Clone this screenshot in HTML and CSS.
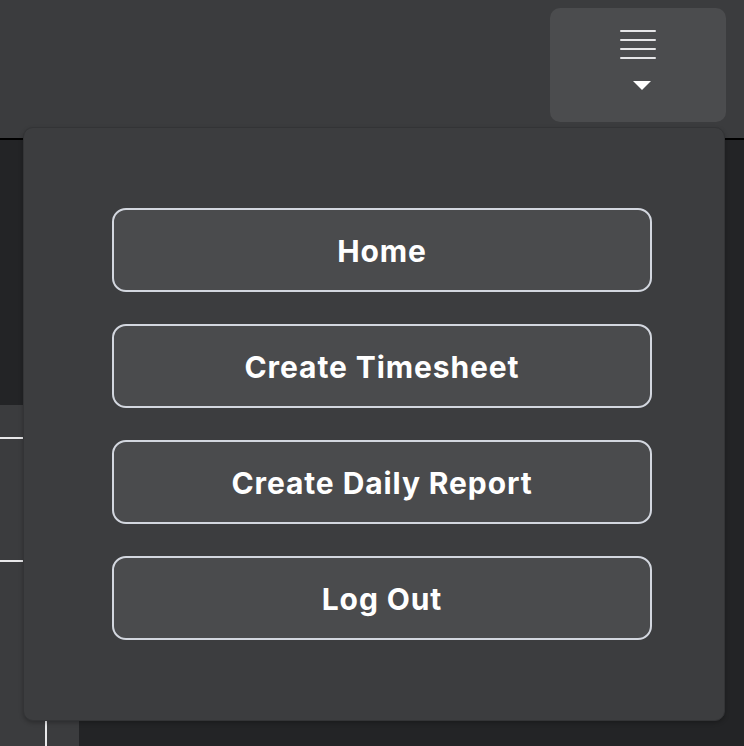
FILE: index.html
```html
<!DOCTYPE html>
<html lang="en">
<head>
    <meta charset="UTF-8">
    <title>Menu</title>
    <link rel="stylesheet" href="styles.css">
</head>
<body>

    <div class="header">
        <button class="menu-btn">
            <span class="bars">
                <span></span><span></span><span></span><span></span>
            </span>
            <span class="caret"></span>
        </button>
    </div>

    <div class="page">
        <div class="top-area"></div>
        <div class="table-card">
            <div class="row"></div>
            <div class="row"></div>
            <div class="row last"><span class="vline"></span></div>
        </div>
    </div>

    <!-- dropdown sits over the page -->
    <div class="dropdown">
        <button class="nav-btn">Home</button>
        <button class="nav-btn">Create Timesheet</button>
        <button class="nav-btn">Create Daily Report</button>
        <button class="nav-btn">Log Out</button>
    </div>

</body>
</html>
```

FILE: styles.css
```css
body {
    margin: 0;
    font-family: 'Inter', 'Liberation Sans', sans-serif;
    background: #232426;
    height: 746px;
    overflow: hidden;
    position: relative;
}
.header {
    height: 140px;
    background: #3b3c3e;
    border-bottom: 2px solid #000;
    display: flex;
    justify-content: flex-end;
    align-items: flex-start;
    padding: 8px 18px 0 0;
    box-sizing: border-box;
}
.menu-btn {
    width: 176px;
    height: 114px;
    background: #4b4c4e;
    border: none;
    border-radius: 10px;
    display: flex;
    flex-direction: column;
    align-items: center;
    padding: 22px 0 0 0;
    cursor: pointer;
}
.bars {
    display: flex;
    flex-direction: column;
    gap: 7px;
    width: 36px;
}
.bars span {
    display: block;
    height: 2px;
    background: #e6e6e8;
    border-radius: 1px;
}
.caret {
    margin: 22px 0 0 8px;
    width: 0;
    height: 0;
    border-left: 9px solid transparent;
    border-right: 9px solid transparent;
    border-top: 9px solid #fff;
}
.page {
    display: flex;
    flex-direction: column;
}
.top-area {
    height: 265px;
    background: #232426;
}
.table-card {
    width: 79px;
    background: #3b3c3e;
    height: 341px;
}
.row {
    height: 32px;
    border-bottom: 2px solid #e8e8ea;
}
.row + .row {
    height: 121px;
}
.row.last {
    border-bottom: none;
    height: 184px;
    position: relative;
}
.vline {
    position: absolute;
    left: 45px;
    top: 0;
    bottom: 0;
    width: 2px;
    background: #e8e8ea;
}
.dropdown {
    position: absolute;
    left: 23px;
    top: 127px;
    width: 702px;
    height: 594px;
    box-sizing: border-box;
    background: #3c3d3f;
    border: 1px solid #333436;
    border-radius: 10px;
    box-shadow: 0 2px 4px rgba(0, 0, 0, 0.25);
    padding: 80px 72px 0 88px;
    display: flex;
    flex-direction: column;
    gap: 32px;
}
.nav-btn {
    height: 84px;
    padding-top: 2px;
    background: #4a4b4d;
    border: 2px solid #d3d7df;
    border-radius: 14px;
    color: #fff;
    font-family: 'Inter', 'Liberation Sans', sans-serif;
    font-size: 30px;
    font-weight: 700;
    letter-spacing: 0.9px;
    cursor: pointer;
}
```
